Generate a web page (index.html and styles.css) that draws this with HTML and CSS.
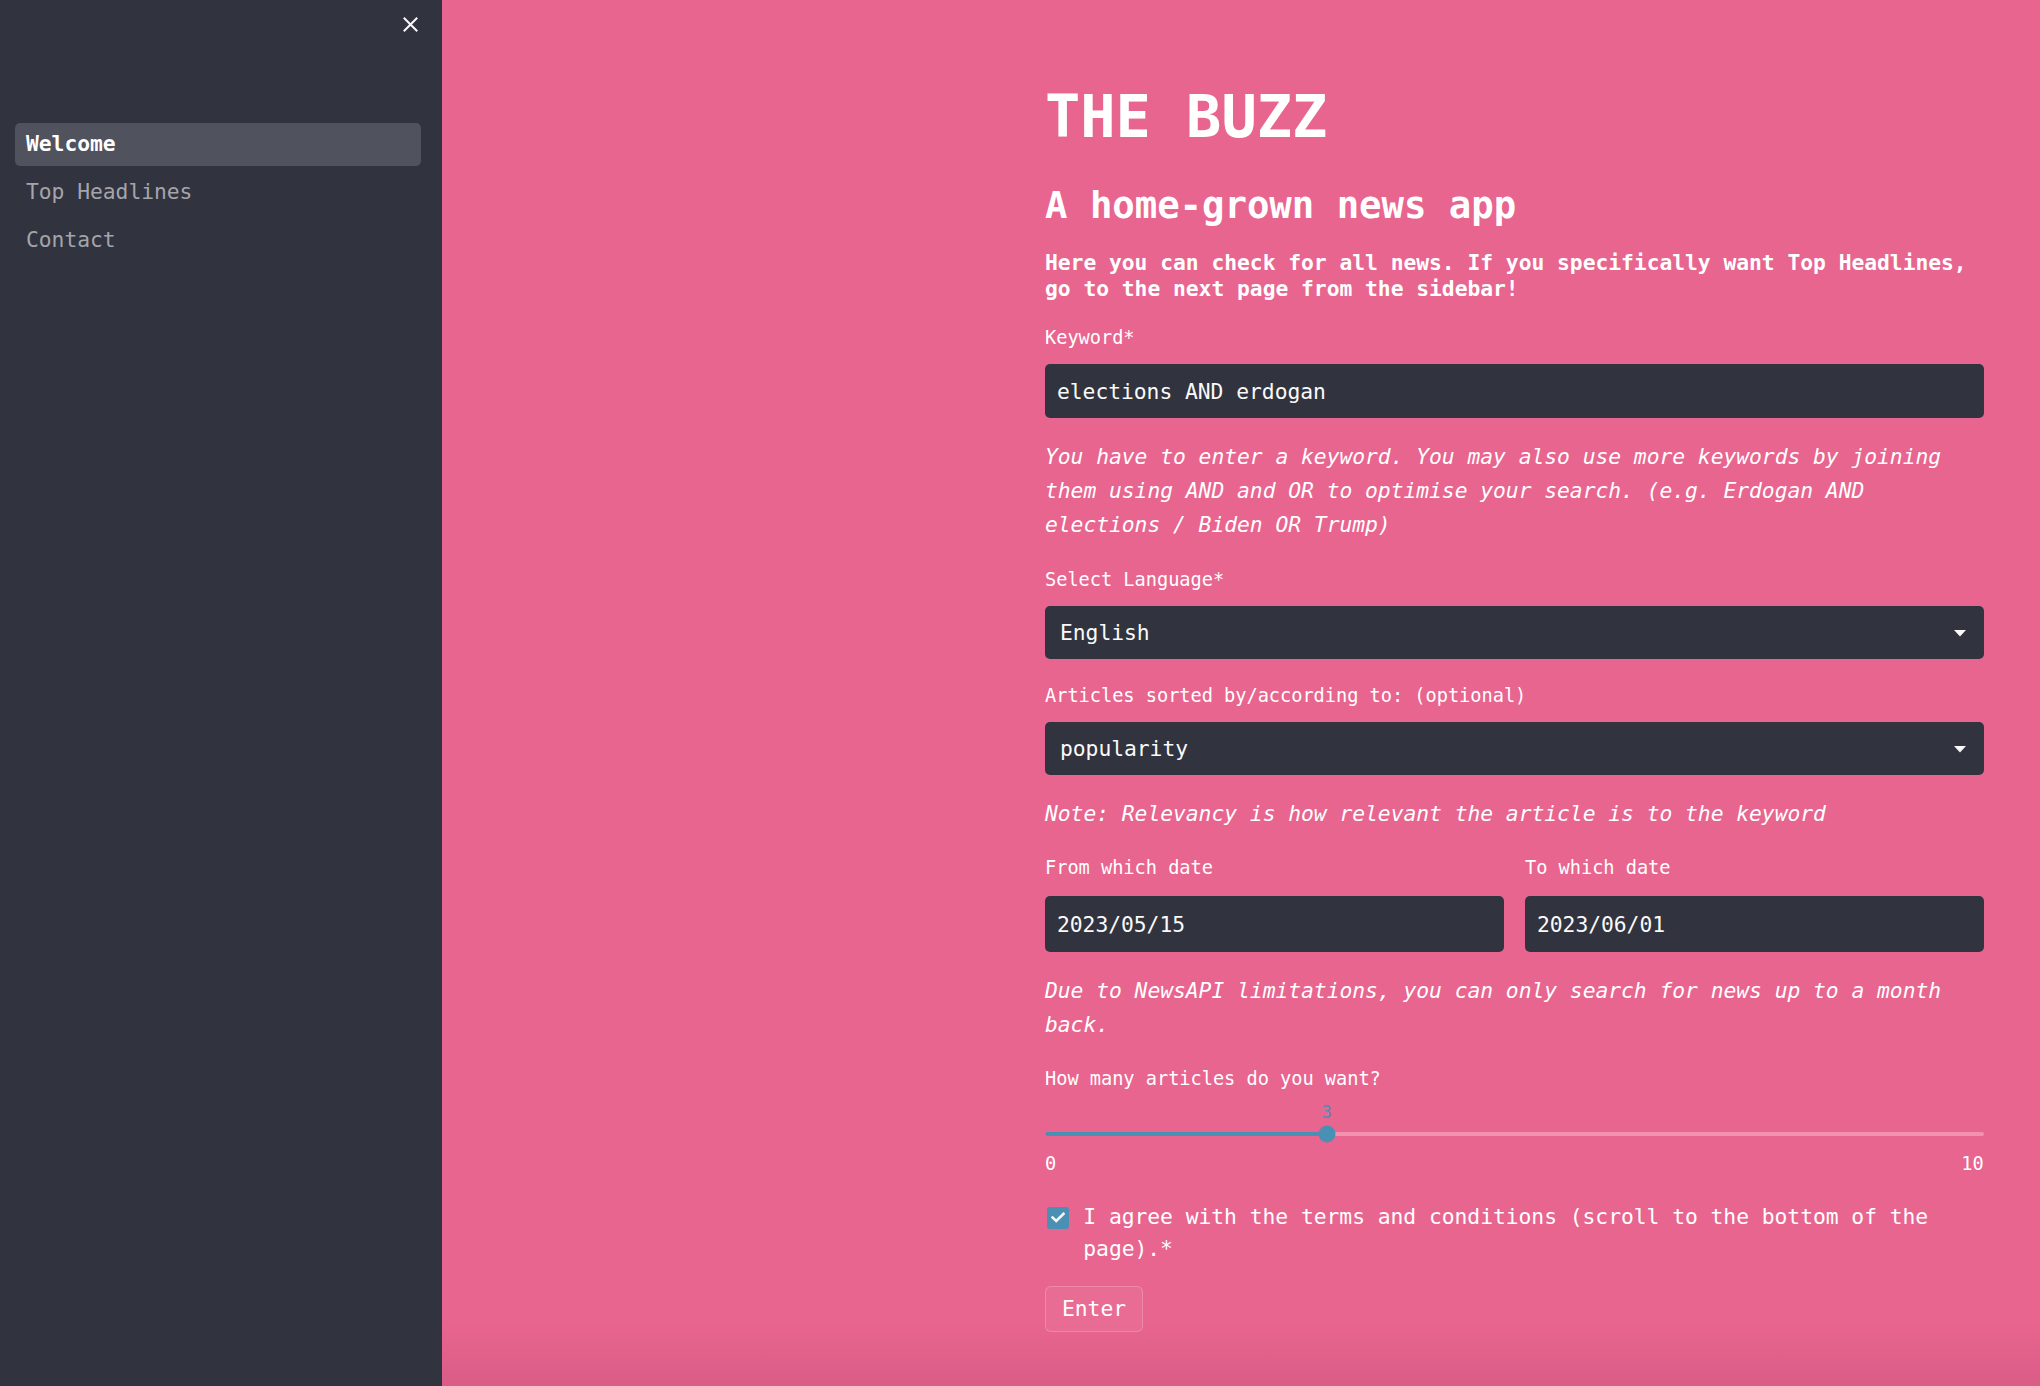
FILE: index.html
```html
<!DOCTYPE html>
<html lang="en">
<head>
<meta charset="utf-8">
<title>THE BUZZ</title>
<link rel="stylesheet" href="styles.css">
</head>
<body>
<div class="app">
  <aside class="sidebar">
    <div class="sidebar-head">
      <button class="close-btn" aria-label="Close sidebar">
        <svg width="15" height="15" viewBox="0 0 15 15"><path d="M1.5 1.5 L13.5 13.5 M13.5 1.5 L1.5 13.5" stroke="#fafafa" stroke-width="2" stroke-linecap="square" fill="none"/></svg>
      </button>
    </div>
    <nav class="nav">
      <a class="nav-link active">Welcome</a>
      <a class="nav-link">Top Headlines</a>
      <a class="nav-link">Contact</a>
    </nav>
  </aside>

  <main class="main">
    <div class="block">
      <h1 class="title">THE BUZZ</h1>
      <h2 class="subtitle">A home-grown news app</h2>
      <h6 class="lead">Here you can check for all news. If you specifically want Top Headlines, go to the next page from the sidebar!</h6>

      <div class="field f-keyword">
        <label class="label">Keyword*</label>
        <div class="control input">elections AND erdogan</div>
      </div>

      <p class="help h-keyword">You have to enter a keyword. You may also use more keywords by joining them using AND and OR to optimise your search. (e.g. Erdogan AND elections / Biden OR Trump)</p>

      <div class="field f-lang">
        <label class="label">Select Language*</label>
        <div class="control select">
          <span>English</span>
          <svg class="caret" width="12" height="7" viewBox="0 0 12 7"><polygon points="0,0 12,0 6,6.5" fill="#fafafa"/></svg>
        </div>
      </div>

      <div class="field f-sort">
        <label class="label">Articles sorted by/according to: (optional)</label>
        <div class="control select">
          <span>popularity</span>
          <svg class="caret" width="12" height="7" viewBox="0 0 12 7"><polygon points="0,0 12,0 6,6.5" fill="#fafafa"/></svg>
        </div>
      </div>

      <p class="help h-note">Note: Relevancy is how relevant the article is to the keyword</p>

      <div class="date-row">
        <div class="field date-field">
          <label class="label">From which date</label>
          <div class="control input date">2023/05/15</div>
        </div>
        <div class="field date-field">
          <label class="label">To which date</label>
          <div class="control input date">2023/06/01</div>
        </div>
      </div>

      <p class="help h-due">Due to NewsAPI limitations, you can only search for news up to a month back.</p>

      <div class="field f-count">
        <label class="label">How many articles do you want?</label>
        <div class="slider">
          <div class="slider-value-row"><span class="slider-value" style="left: 30%">3</span></div>
          <div class="track">
            <div class="fill" style="width: 30%"></div>
            <div class="thumb" style="left: 30%"></div>
          </div>
          <div class="ticks"><span>0</span><span>10</span></div>
        </div>
      </div>

      <label class="check-row">
        <span class="checkbox">
          <svg width="14" height="11" viewBox="0 0 14 11"><path d="M1.5 5.5 L5.2 9 L12.5 1.8" stroke="#f4f6f8" stroke-width="2.6" fill="none" stroke-linecap="square"/></svg>
        </span>
        <span class="check-text">I agree with the terms and conditions (scroll to the bottom of the page).*</span>
      </label>

      <button class="btn">Enter</button>
    </div>
  </main>
</div>
</body>
</html>
```

FILE: styles.css
```css
* {
  box-sizing: border-box;
}

html, body {
  margin: 0;
  padding: 0;
  height: 100%;
  overflow: hidden;
}

body {
  font-family: "DejaVu Sans Mono", "Liberation Mono", monospace;
  letter-spacing: -0.04px;
  color: #ffffff;
  background: #e8658f;
}

.app {
  display: flex;
  height: 100vh;
}

/* Sidebar */
.sidebar {
  width: 442px;
  flex: 0 0 442px;
  background: #31333f;
  color: #fafafa;
}

.sidebar-head {
  height: 48px;
  display: flex;
  align-items: center;
  justify-content: flex-end;
  padding-right: 16px;
}

.close-btn {
  width: 32px;
  height: 32px;
  padding: 0;
  border: none;
  background: transparent;
  display: flex;
  align-items: center;
  justify-content: center;
}

.nav {
  margin-top: 75px;
  padding: 0 21px 0 15px;
  display: flex;
  flex-direction: column;
}

.nav-link {
  display: block;
  height: 43px;
  line-height: 41px;
  padding: 0 0 2px 11px;
  margin-bottom: 5px;
  font-size: 21.33px;
  color: #a4a5ab;
  border-radius: 5px;
  text-decoration: none;
}

.nav-link.active {
  background: #50525d;
  color: #ffffff;
  font-weight: 700;
}

/* Main */
.main {
  flex: 1;
  position: relative;
  background: #e8658f;
  display: flex;
  justify-content: flex-end;
}

.main::after {
  content: "";
  position: absolute;
  left: 0;
  right: 0;
  bottom: 0;
  height: 64px;
  background: linear-gradient(to bottom, rgba(90, 20, 60, 0), rgba(90, 20, 60, 0.1));
  pointer-events: none;
}

.block {
  width: 938.67px;
  margin-right: 56.33px;
  padding-top: 82px;
}

.title {
  margin: 0;
  font-size: 58.67px;
  line-height: 70.4px;
  font-weight: 700;
}

.subtitle {
  margin: 30.8px 0 0;
  font-size: 37.33px;
  line-height: 44.8px;
  font-weight: 700;
}

.lead {
  margin: 22.3px 0 0;
  font-size: 21.33px;
  line-height: 25.6px;
  font-weight: 700;
}

.field {
  display: flex;
  flex-direction: column;
}

.label {
  display: block;
  font-size: 18.67px;
  line-height: 29.87px;
  color: #ffffff;
}

.control {
  margin-top: 11.5px;
  background: #31333f;
  color: #fafafa;
  border-radius: 5px;
  font-size: 21.33px;
  line-height: 26px;
  display: flex;
  align-items: center;
}

.input {
  height: 53.7px;
  padding: 1px 12px 0;
}

.select {
  height: 53px;
  padding: 1px 18px 0 12px;
  justify-content: space-between;
}

.select span {
  padding-left: 3px;
}

.caret {
  display: block;
  margin-top: 0;
}

.f-keyword { margin-top: 21.6px; }
.f-lang { margin-top: 23px; }
.f-sort { margin-top: 21.6px; }
.f-count { margin-top: 21.8px; }

.help {
  margin: 21.5px 0 0;
  font-size: 21.33px;
  line-height: 34.13px;
  font-style: italic;
}

.h-note { margin-top: 22px; }
.h-due { margin-top: 22.6px; }

.date-row {
  margin-top: 22px;
  display: grid;
  grid-template-columns: 1fr 1fr;
  column-gap: 21.33px;
}

.date-field .control {
  margin-top: 12.2px;
}

.date {
  height: 56px;
  padding-top: 2px;
}

/* Slider */
.slider {
  margin-top: 7px;
}

.slider-value-row {
  position: relative;
  height: 30.5px;
}

.slider-value {
  position: absolute;
  top: 0;
  transform: translateX(-50%);
  font-size: 17.5px;
  line-height: 22px;
  color: #4a8fb4;
}

.track {
  position: relative;
  height: 4px;
  border-radius: 2px;
  background: #f092b0;
}

.fill {
  height: 100%;
  border-radius: 2px;
  background: #4a8fb4;
}

.thumb {
  position: absolute;
  top: 50%;
  width: 17px;
  height: 17px;
  border-radius: 50%;
  background: #4a8fb4;
  transform: translate(-50%, -50%);
}

.ticks {
  margin-top: 17.8px;
  display: flex;
  justify-content: space-between;
  font-size: 18.67px;
  line-height: 22px;
}

/* Checkbox */
.check-row {
  margin-top: 25.4px;
  display: flex;
  align-items: flex-start;
}

.checkbox {
  flex: 0 0 22px;
  width: 22px;
  height: 22px;
  margin: 6px 14.3px 0 2px;
  background: #4a8fb4;
  border-radius: 3px;
  display: flex;
  align-items: center;
  justify-content: center;
}

.check-text {
  font-size: 21.33px;
  line-height: 32px;
}

/* Button */
.btn {
  margin-top: 20.8px;
  height: 46.4px;
  padding: 0 16px;
  font-family: inherit;
  font-size: 21.33px;
  letter-spacing: -0.04px;
  color: #ffffff;
  background: rgba(255, 255, 255, 0.05);
  border: 1px solid rgba(255, 255, 255, 0.2);
  border-radius: 6px;
}
```
